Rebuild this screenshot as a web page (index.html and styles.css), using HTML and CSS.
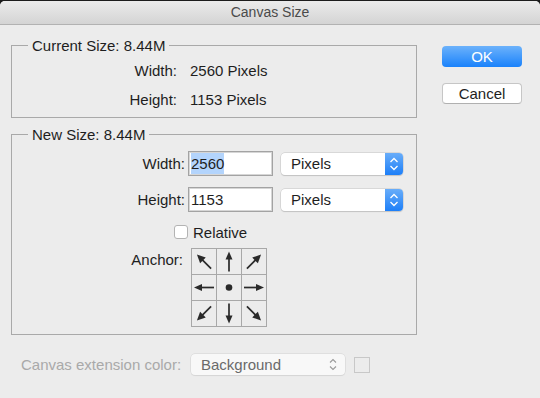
FILE: index.html
```html
<!DOCTYPE html>
<html>
<head>
    <meta charset="UTF-8">
    <title>Canvas Size</title>
    <link rel="stylesheet" href="styles.css">
</head>
<body>
<div class="window">
    <div class="titlebar">Canvas Size</div>
    <div class="content">
        <div class="main">
            <fieldset class="group current">
                <legend>Current Size: 8.44M</legend>
                <div class="info-row">
                    <span class="info-label">Width:</span>
                    <span class="info-value">2560 Pixels</span>
                </div>
                <div class="info-row">
                    <span class="info-label">Height:</span>
                    <span class="info-value">1153 Pixels</span>
                </div>
            </fieldset>

            <fieldset class="group new">
                <legend>New Size: 8.44M</legend>
                <div class="field-row">
                    <label class="field-label">Width:</label>
                    <div class="textfield"><span class="selected">2560</span></div>
                    <div class="popup">
                        <span class="popup-text">Pixels</span>
                        <span class="stepper">
                            <svg width="18" height="22" viewBox="0 0 18 22"><polyline points="5.5,9 9,5.5 12.5,9" /><polyline points="5.5,13 9,16.5 12.5,13" /></svg>
                        </span>
                    </div>
                </div>
                <div class="field-row">
                    <label class="field-label">Height:</label>
                    <div class="textfield">1153</div>
                    <div class="popup">
                        <span class="popup-text">Pixels</span>
                        <span class="stepper">
                            <svg width="18" height="22" viewBox="0 0 18 22"><polyline points="5.5,9 9,5.5 12.5,9" /><polyline points="5.5,13 9,16.5 12.5,13" /></svg>
                        </span>
                    </div>
                </div>
                <div class="check-row">
                    <span class="checkbox"></span>
                    <span class="check-label">Relative</span>
                </div>
                <div class="anchor-row">
                    <span class="anchor-label">Anchor:</span>
                    <div class="anchor-grid">
                        <div class="cell"><svg viewBox="0 0 24 24"><g transform="rotate(-135 12 12)"><line x1="2" y1="12" x2="15" y2="12" /><polygon points="22,12 13.5,8 13.5,16" /></g></svg></div>
                        <div class="cell"><svg viewBox="0 0 24 24"><g transform="rotate(-90 12 12)"><line x1="2" y1="12" x2="15" y2="12" /><polygon points="22,12 14,8.5 14,15.5" /></g></svg></div>
                        <div class="cell"><svg viewBox="0 0 24 24"><g transform="rotate(-45 12 12)"><line x1="2" y1="12" x2="15" y2="12" /><polygon points="22,12 13.5,8 13.5,16" /></g></svg></div>
                        <div class="cell"><svg viewBox="0 0 24 24"><g transform="rotate(180 12 12)"><line x1="2" y1="12" x2="15" y2="12" /><polygon points="22,12 14,8.5 14,15.5" /></g></svg></div>
                        <div class="cell"><svg viewBox="0 0 24 24"><circle cx="12" cy="12" r="3.3" /></svg></div>
                        <div class="cell"><svg viewBox="0 0 24 24"><line x1="2" y1="12" x2="15" y2="12" /><polygon points="22,12 14,8.5 14,15.5" /></svg></div>
                        <div class="cell"><svg viewBox="0 0 24 24"><g transform="rotate(135 12 12)"><line x1="2" y1="12" x2="15" y2="12" /><polygon points="22,12 13.5,8 13.5,16" /></g></svg></div>
                        <div class="cell"><svg viewBox="0 0 24 24"><g transform="rotate(90 12 12)"><line x1="2" y1="12" x2="15" y2="12" /><polygon points="22,12 14,8.5 14,15.5" /></g></svg></div>
                        <div class="cell"><svg viewBox="0 0 24 24"><g transform="rotate(45 12 12)"><line x1="2" y1="12" x2="15" y2="12" /><polygon points="22,12 13.5,8 13.5,16" /></g></svg></div>
                    </div>
                </div>
            </fieldset>

            <div class="extension-row">
                <span class="extension-label">Canvas extension color:</span>
                <div class="popup disabled">
                    <span class="popup-text">Background</span>
                    <span class="stepper">
                        <svg width="18" height="21" viewBox="0 0 18 21"><polyline points="6,8.5 9,5.5 12,8.5" /><polyline points="6,12.5 9,15.5 12,12.5" /></svg>
                    </span>
                </div>
                <span class="swatch"></span>
            </div>
        </div>

        <div class="buttons">
            <button type="button" class="btn btn-ok">OK</button>
            <button type="button" class="btn btn-cancel">Cancel</button>
        </div>
    </div>
</div>
</body>
</html>
```

FILE: styles.css
```css
html, body {
    margin: 0;
    padding: 0;
    height: 100%;
}
body {
    background-color: #1c1c1c;
    font-family: "Liberation Sans", Arial, sans-serif;
    font-size: 15px;
    color: #1e1e1e;
    overflow: hidden;
}
.window {
    margin-top: 1px;
    height: 397px;
    background-color: #ececec;
    border-radius: 5px 5px 0 0;
    overflow: hidden;
}
.titlebar {
    height: 23px;
    line-height: 23px;
    text-align: center;
    font-size: 14px;
    color: #4a4a4a;
    background: linear-gradient(#ebebeb, #d4d4d4);
    border-bottom: 1px solid #b2b2b2;
}
.content {
    display: flex;
    padding-left: 11px;
}
.main {
    width: 406px;
}

/* group boxes */
.group {
    box-sizing: border-box;
    width: 406px;
    margin: 0;
    padding: 0;
    border: 1px solid #a9a9a9;
    min-inline-size: 0;
}
.group legend {
    margin-left: 16px;
    padding: 0 4px;
    line-height: 15px;
}
.current {
    margin-top: 13px;
    padding: 10px 0 10px 0;
}
.new {
    margin-top: 9px;
    padding: 9px 0 7px 0;
}

.info-row {
    display: flex;
    line-height: 15px;
}
.info-row + .info-row {
    margin-top: 14px;
}
.info-label {
    width: 165px;
    text-align: right;
}
.info-value {
    margin-left: 13px;
}

.field-row {
    display: flex;
    align-items: center;
    height: 25px;
}
.field-row + .field-row {
    margin-top: 11px;
}
.field-label {
    width: 173px;
    text-align: right;
}
.textfield {
    box-sizing: border-box;
    margin-left: 3px;
    width: 85px;
    height: 25px;
    padding: 0 2px;
    line-height: 23px;
    background: #ffffff;
    border: 1px solid #a3a3a3;
    box-shadow: inset 0 0 0 1px #d6d6d6;
}
.selected {
    background-color: #b3d4fc;
    padding: 2px 0;
}

.popup {
    box-sizing: border-box;
    display: flex;
    align-items: center;
    margin-left: 8px;
    width: 122px;
    height: 22px;
    background: #ffffff;
    border-radius: 4px;
    box-shadow: 0 0 0 0.5px #c4c4c4, 0 1px 1px rgba(0, 0, 0, 0.18);
    overflow: hidden;
}
.popup-text {
    flex: 1;
    padding-left: 10px;
}
.stepper {
    display: flex;
    width: 18px;
    height: 100%;
    background: linear-gradient(#69adf9, #1d7ff8);
}
.stepper polyline {
    fill: none;
    stroke: #ffffff;
    stroke-width: 1.3;
}

.check-row {
    display: flex;
    align-items: center;
    margin-top: 13px;
    height: 14px;
}
.checkbox {
    box-sizing: border-box;
    margin-left: 162px;
    width: 14px;
    height: 14px;
    background: #ffffff;
    border: 1px solid #b3b3b3;
    border-radius: 3px;
}
.check-label {
    margin-left: 5px;
}

.anchor-row {
    display: flex;
    align-items: flex-start;
    margin-top: 9px;
}
.anchor-label {
    width: 171px;
    margin-top: 3px;
    text-align: right;
}
.anchor-grid {
    display: grid;
    grid-template-columns: repeat(3, 24px);
    grid-template-rows: repeat(3, 25px);
    gap: 1px;
    margin-left: 8px;
    padding: 1px;
    background-color: #a8a8a8;
}
.cell {
    background-color: #ececec;
}
.cell svg {
    display: block;
    width: 24px;
    height: 25px;
}
.cell line {
    stroke: #2a2a2a;
    stroke-width: 1.7;
}
.cell polygon, .cell circle {
    fill: #2a2a2a;
}

.extension-row {
    display: flex;
    align-items: center;
    margin-top: 19px;
    height: 21px;
}
.extension-label {
    width: 170px;
    margin-left: 10px;
    white-space: nowrap;
    color: #a9a9a9;
}
.popup.disabled {
    margin-left: 0;
    width: 154px;
    height: 21px;
    background: #f8f8f8;
    box-shadow: 0 0 0 0.5px #d2d2d2, 0 1px 1px rgba(0, 0, 0, 0.08);
}
.popup.disabled .popup-text {
    color: #6a6a6a;
}
.popup.disabled .stepper {
    background: none;
    margin-right: 3px;
}
.popup.disabled .stepper polyline {
    stroke: #9a9a9a;
    stroke-width: 1.1;
}
.swatch {
    box-sizing: border-box;
    margin-left: 9px;
    width: 16px;
    height: 16px;
    border: 1px solid #c8c8c8;
}

/* buttons */
.buttons {
    display: flex;
    flex-direction: column;
    margin-left: 25px;
    padding-top: 21px;
}
.btn {
    box-sizing: border-box;
    width: 80px;
    height: 21px;
    padding: 0;
    border-radius: 4px;
    font-family: "Liberation Sans", Arial, sans-serif;
    font-size: 15px;
}
.btn-ok {
    color: #ffffff;
    border: none;
    background: linear-gradient(#6cb2fb, #1a82fb);
}
.btn-cancel {
    margin-top: 16px;
    color: #1e1e1e;
    background: #ffffff;
    border: 1px solid #c6c6c6;
    border-bottom-color: #b0b0b0;
}
```
